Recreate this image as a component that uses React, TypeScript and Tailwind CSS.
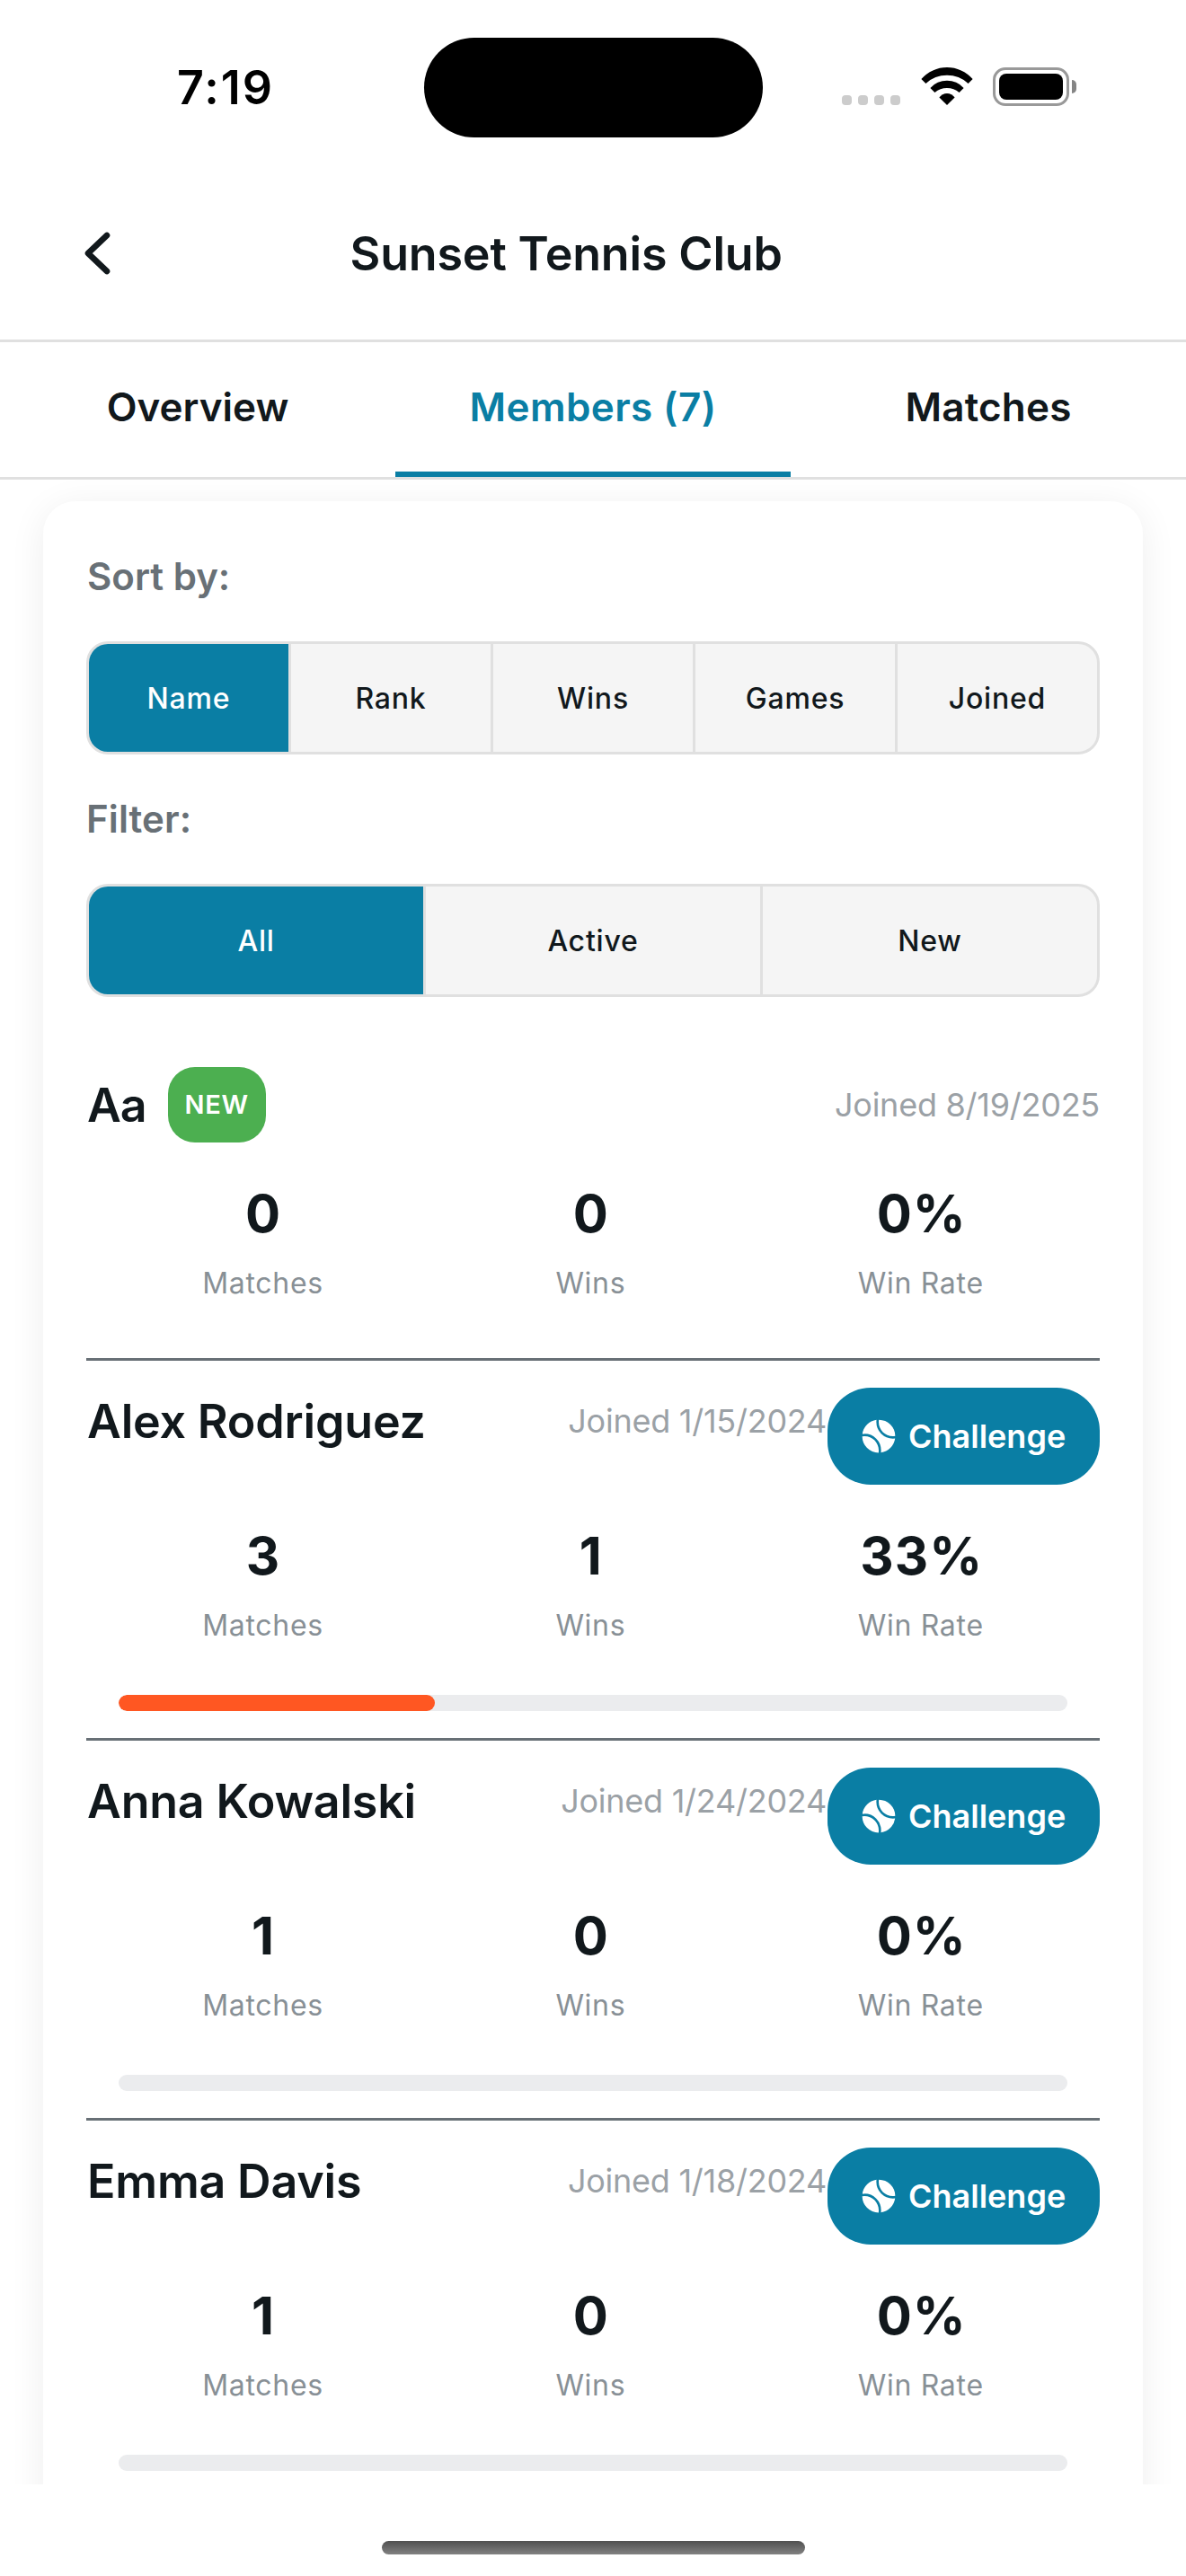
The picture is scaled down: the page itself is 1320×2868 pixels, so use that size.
import { IoTennisball } from "react-icons/io5";

type Member = {
  name: string;
  joined: string;
  matches: string;
  wins: string;
  rate: string;
  progress?: number;
  isNew?: boolean;
};

const members: Member[] = [
  { name: "Aa", joined: "8/19/2025", matches: "0", wins: "0", rate: "0%", isNew: true },
  { name: "Alex Rodriguez", joined: "1/15/2024", matches: "3", wins: "1", rate: "33%", progress: 33.33 },
  { name: "Anna Kowalski", joined: "1/24/2024", matches: "1", wins: "0", rate: "0%", progress: 0 },
  { name: "Emma Davis", joined: "1/18/2024", matches: "1", wins: "0", rate: "0%", progress: 0 },
];

function StatusBar() {
  return (
    <div className="grid h-[186px] shrink-0 grid-cols-[472px_377px_471px] items-center pt-[10px]">
      <div className="pl-[197px] text-[52px] leading-none font-semibold tracking-[2px] text-black">7:19</div>
      <div className="-mt-px h-[111px] rounded-full bg-black" />
      <div className="-mt-[3px] flex h-[43px] pl-[88px]">
        <div className="flex items-end gap-[7px] pb-px">
          <span className="size-[11px] rounded-[4px] bg-[#cccccc]" />
          <span className="size-[11px] rounded-[4px] bg-[#cccccc]" />
          <span className="size-[11px] rounded-[4px] bg-[#cccccc]" />
          <span className="size-[11px] rounded-[4px] bg-[#cccccc]" />
        </div>
        <svg className="ml-[23px] h-[42px] w-[58px]" viewBox="0 0 58 42" fill="black">
          <path d="M.4 13A38 38 0 0 1 57.6 13L52.6 18A34.6 34.6 0 0 0 5.4 18Z" />
          <path d="M10.4 23A25 25 0 0 1 47.6 23L42.6 28A21 21 0 0 0 15.4 28Z" />
          <path d="M20.4 33.5A10.5 10.5 0 0 1 37.6 33.5L29 42Z" />
        </svg>
        <div className="ml-[22px] h-[43px] w-[85px] rounded-[14px] border-[3px] border-[#999999] p-[4px]">
          <div className="h-full w-full rounded-[8px] bg-black" />
        </div>
        <div className="mt-[14px] ml-[3px] h-[15px] w-[5px] rounded-r-full bg-[#858585]" />
      </div>
    </div>
  );
}

function Segmented({ items }: { items: string[] }) {
  return (
    <div className="flex h-[126px] overflow-hidden rounded-[24px] border-[3px] border-[#e0e0e0] bg-[#f5f5f5]">
      {items.map((item, i) => (
        <div
          key={item}
          className={
            "flex flex-1 items-center justify-center border-[#e0e0e0] pt-px text-[32px] font-medium tracking-[0.8px] " +
            (i < items.length - 1 ? "border-r-[3px] " : "") +
            (i === 0 ? "bg-[#0a7ea4] text-white" : "text-[#11181c]")
          }
        >
          {item}
        </div>
      ))}
    </div>
  );
}

function Stat({ value, label }: { value: string; label: string }) {
  return (
    <div className="flex flex-col items-center gap-[18px]">
      <div
        className={
          "h-[72px] text-[58px] leading-[72px] font-bold text-[#11181c] " +
          (value.length > 1 ? "pl-[2px] tracking-[1px]" : "")
        }
      >
        {value}
      </div>
      <div className="h-[48px] text-[32px] leading-[48px] tracking-[0.7px] text-[#889096]">{label}</div>
    </div>
  );
}

function MemberRow({ member }: { member: Member }) {
  return (
    <div
      className={
        "border-b-[3px] border-[#687076] " + (member.isNew ? "pt-[78px] pb-[59px]" : "pt-[30px] pb-[30px]")
      }
    >
      <div className={"flex justify-between " + (member.isNew ? "h-[84px] items-center" : "h-[108px] items-start")}>
        <div className="flex items-center">
          <span
            className={
              "h-[74px] text-[52px] leading-[76px] font-semibold whitespace-nowrap text-[#11181c] " +
              (member.isNew ? "ml-px tracking-[-1px]" : "ml-px tracking-[-0.2px]")
            }
          >
            {member.name}
          </span>
          {member.isNew && (
            <span className="ml-[24px] flex h-[84px] w-[109px] items-center justify-center rounded-[30px] bg-[#4caf50] text-[29px] font-semibold tracking-[0.8px] text-white">
              NEW
            </span>
          )}
        </div>
        <div className="flex items-start">
          <span
            className={
              "h-[74px] text-[36px] leading-[74px] tracking-[-0.25px] whitespace-nowrap text-[#9ba1a6] " +
              (member.isNew ? "" : "pr-px")
            }
          >
            Joined {member.joined}
          </span>
          {!member.isNew && (
            <button className="flex h-[108px] w-[303px] items-center rounded-[48px] bg-[#0a7ea4] pl-[36px] text-white">
              <IoTennisball className="size-[42px]" />
              <span className="ml-[12px] text-[36px] font-semibold">Challenge</span>
            </button>
          )}
        </div>
      </div>
      <div className="mt-[43px] flex justify-around">
        <Stat value={member.matches} label="Matches" />
        <Stat value={member.wins} label="Wins" />
        <Stat value={member.rate} label="Win Rate" />
      </div>
      {member.progress !== undefined && (
        <div className="mx-[36px] mt-[53px] h-[18px] overflow-hidden rounded-[9px] bg-[#ebecee]">
          <div className="h-full rounded-[9px] bg-[#ff5722]" style={{ width: `${member.progress}%` }} />
        </div>
      )}
    </div>
  );
}

export default function App() {
  return (
    <div className="flex h-[2868px] w-[1320px] flex-col overflow-hidden bg-white font-[Inter,sans-serif]">
      <StatusBar />
      <header className="flex h-[195px] shrink-0 items-center border-b-[3px] border-[#e0e0e0] pl-[94px]">
        <svg className="h-[48px] w-[29px]" viewBox="0 0 29 48" fill="none" stroke="#11181c">
          <path d="M25 4L4 24L25 44" strokeWidth="6.6" strokeLinecap="round" strokeLinejoin="round" />
        </svg>
        <h1 className="mt-[2px] ml-[266.5px] text-[52px] leading-[72px] font-semibold tracking-[-0.17px] text-[#11181c]">
          Sunset Tennis Club
        </h1>
      </header>
      <nav className="grid h-[153px] shrink-0 grid-cols-3 border-b-[3px] border-[#e0e0e0] text-[44px] font-[560] text-[#11181c]">
        <div className="flex items-center justify-center border-b-[6px] border-transparent">Overview</div>
        <div className="flex items-center justify-center border-b-[6px] border-[#0a7ea4] tracking-[0.4px] text-[#0a7ea4]">
          Members (7)
        </div>
        <div className="flex items-center justify-center border-b-[6px] border-transparent tracking-[0.2px]">Matches</div>
      </nav>
      <main className="h-[2232px] shrink-0 overflow-hidden px-[48px] pt-[24px]">
        <div className="rounded-[36px] bg-white p-[48px] shadow-[0_6px_40px_rgba(0,0,0,0.07)]">
          <div className="h-[72px] pl-px text-[42px] leading-[72px] font-semibold text-[#687076]">Sort by:</div>
          <div className="mt-[36px]">
            <Segmented items={["Name", "Rank", "Wins", "Games", "Joined"]} />
          </div>
          <div className="mt-[36px] h-[72px] text-[42px] leading-[72px] font-semibold tracking-[0.1px] text-[#687076]">
            Filter:
          </div>
          <div className="mt-[36px]">
            <Segmented items={["All", "Active", "New"]} />
          </div>
          {members.map((m) => (
            <MemberRow key={m.name} member={m} />
          ))}
        </div>
      </main>
      <div className="flex flex-1 justify-center pt-[63px]">
        <div className="h-[15px] w-[471px] rounded-full bg-linear-to-b from-[#505050] to-[#828282]" />
      </div>
    </div>
  );
}
